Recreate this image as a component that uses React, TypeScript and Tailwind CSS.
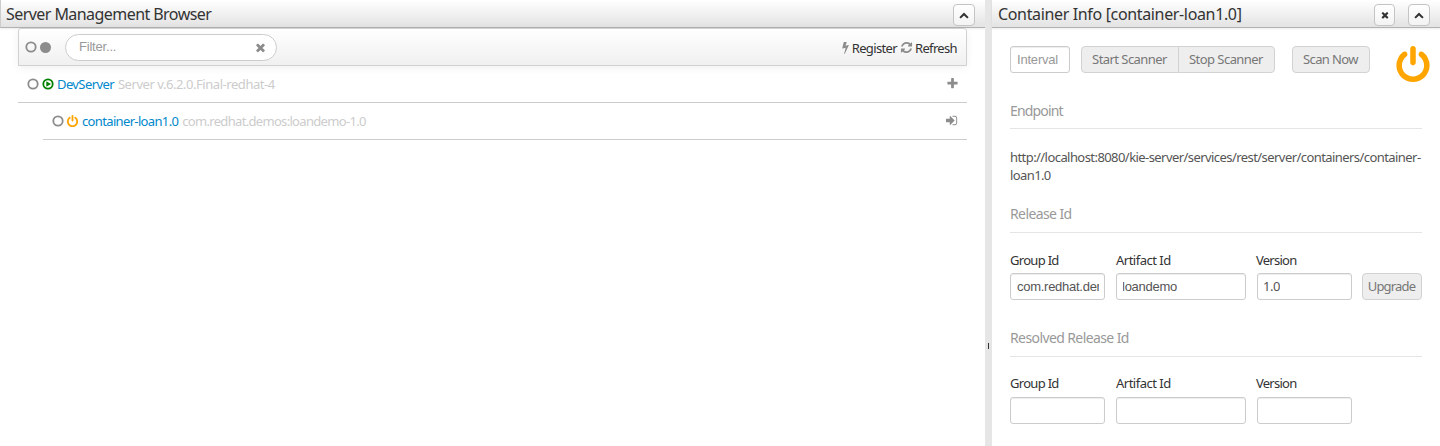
import React from "react";

const POWER =
  "M1664 896q0 156-61 298t-164 245-245 164-298 61-298-61-245-164-164-245-61-298q0-182 80.5-343t226.5-270q43-32 95.5-25t83.5 50q32 42 24.5 94.5t-49.5 84.5q-98 74-151.5 181t-53.5 228q0 104 40.5 198.5t109.5 163.5 163.5 109.5 198.5 40.5 198.5-40.5 163.5-109.5 109.5-163.5 40.5-198.5q0-121-53.5-228t-151.5-181q-42-32-49.5-84.5t24.5-94.5q31-43 84-50t95 25q146 109 226.5 270t80.5 343zm-640-768v640q0 52-38 90t-90 38-90-38-38-90v-640q0-52 38-90t90-38 90 38 38 90z";
const TIMES =
  "M1490 1322q0 40-28 68l-136 136q-28 28-68 28t-68-28l-294-294-294 294q-28 28-68 28t-68-28l-136-136q-28-28-28-68t28-68l294-294-294-294q-28-28-28-68t28-68l136-136q28-28 68-28t68 28l294 294 294-294q28-28 68-28t68 28l136 136q28 28 28 68t-28 68l-294 294 294 294q28 28 28 68z";
const PLUS =
  "M1600 736v192q0 40-28 68t-68 28h-416v416q0 40-28 68t-68 28h-192q-40 0-68-28t-28-68v-416h-416q-40 0-68-28t-28-68v-192q0-40 28-68t68-28h416v-416q0-40 28-68t68-28h192q40 0 68 28t28 68v416h416q40 0 68 28t28 68z";
const REFRESH =
  "M1639 1056q0 5-1 7-64 268-268 434.5t-478 166.5q-146 0-282.5-55t-243.5-157l-129 129q-19 19-45 19t-45-19-19-45v-448q0-26 19-45t45-19h448q26 0 45 19t19 45-19 45l-137 137q71 66 161 102t187 36q134 0 250-65t186-179q11-17 53-117 8-23 30-23h192q13 0 22.5 9.5t9.5 22.5zm25-800v448q0 26-19 45t-45 19h-448q-26 0-45-19t-19-45 19-45l138-138q-148-137-349-137-134 0-250 65t-186 179q-11 17-53 117-8 23-30 23h-199q-13 0-22.5-9.5t-9.5-22.5v-7q65-268 270-434.5t480-166.5q146 0 284 55.5t245 156.5l130-129q19-19 45-19t45 19 19 45z";
const BOLT =
  "M1333 566q18 20 7 44l-540 1157q-13 25-42 25-4 0-14-2-17-5-25.5-19t-4.5-30l197-808-406 101q-4 1-12 1-18 0-31-11-18-15-13-39l201-825q4-14 16-23t28-9h328q19 0 32 12.5t13 29.5q0 8-5 18l-171 463 396-98q8-2 12-2 19 0 34 15z";
const SIGN_IN =
  "M1184 896q0 26-19 45l-544 544q-19 19-45 19t-45-19-19-45v-288h-448q-26 0-45-19t-19-45v-384q0-26 19-45t45-19h448v-288q0-26 19-45t45-19 45 19l544 544q19 19 19 45zm352-352v704q0 119-84.5 203.5t-203.5 84.5h-320q-13 0-22.5-9.5t-9.5-22.5q0-4-1-20t-.5-26.5 3-23.5 10-19.5 20.5-6.5h320q66 0 113-47t47-113v-704q0-66-47-113t-113-47h-312l-11.5-1-11.5-3-8-5.5-7-9-2-13.5q0-4-1-20t-.5-26.5 3-23.5 10-19.5 20.5-6.5h320q119 0 203.5 84.5t84.5 203.5z";
const CHEVRON_UP =
  "M1683 1331l-166 165q-19 19-45 19t-45-19l-531-531-531 531q-19 19-45 19t-45-19l-166-165q-19-19-19-45.5t19-45.5l742-741q19-19 45-19t45 19l742 741q19 19 19 45.5t-19 45.5z";

function Icon({ d, className }: { d: string; className: string }) {
  return (
    <svg viewBox="0 0 1792 1792" fill="currentColor" className={`shrink-0 ${className}`}>
      <path d={d} />
    </svg>
  );
}

function Ring() {
  return (
    <svg viewBox="0 0 12 12" className="size-3 shrink-0 text-[#8c8c8c]">
      <circle cx="6" cy="6" r="4.7" fill="none" stroke="currentColor" strokeWidth="1.8" />
    </svg>
  );
}

function HeaderButton({ d, className, icon }: { d: string; className: string; icon: string }) {
  return (
    <button className={`flex h-[22px] items-center justify-center rounded border border-[#c4c4c4] bg-gradient-to-b from-white to-[#f3f3f3] text-[#333] ${className}`}>
      <Icon d={d} className={icon} />
    </button>
  );
}

function Header({ title, className, children }: { title: React.ReactNode; className: string; children: React.ReactNode }) {
  return (
    <header className={`flex h-7 items-start border-b border-[#b2b2b2] bg-gradient-to-b from-white to-[#e3e3e3] shadow-[0_1px_2px_rgba(0,0,0,0.08)] ${className}`}>
      <h1 className="grow whitespace-nowrap pt-[2px] text-base leading-6 text-[#333]">{title}</h1>
      {children}
    </header>
  );
}

function SectionTitle({ children, className }: { children: React.ReactNode; className: string }) {
  return <h2 className={`border-b border-[#e5e5e5] text-sm leading-[18px] text-[#999] ${className}`}>{children}</h2>;
}

const inputBox =
  "flex h-[27px] items-center overflow-hidden whitespace-nowrap rounded-[3px] border border-[#ccc] bg-white pl-[6px] pr-[5px] font-['Liberation_Sans',sans-serif] text-[13px] text-[#555] shadow-[inset_0_1px_1px_rgba(0,0,0,0.075)]";
const button =
  "flex h-[27px] items-center justify-center whitespace-nowrap border border-[#d2d2d2] bg-[#eee] text-[13px] text-[#777]";

function Field({ label, value, className }: { label: React.ReactNode; value: React.ReactNode; className: string }) {
  return (
    <div className={className}>
      <div className="h-[22px] text-[13px] leading-[18px] text-[#333]">{label}</div>
      <div className={inputBox}>
        <div className="overflow-hidden">{value}</div>
      </div>
    </div>
  );
}

export default function App() {
  return (
    <div className="flex h-[446px] w-[1440px] overflow-hidden bg-white font-['Noto_Sans',sans-serif] text-[13px] text-[#333]">
      <main className="w-[985px]">
        <Header className="border-l border-l-[#ccc] pl-[5px] pr-[10px]" title={<span className="tracking-[-0.56px]">Server Management Browser</span>}>
          <HeaderButton d={CHEVRON_UP} className="mt-1 w-[22px]" icon="size-[10px]" />
        </Header>
        <div className="ml-[18px] w-[949px]">
          <div className="flex h-[38px] items-center rounded-t-[3px] border border-[#d1d1d1] bg-gradient-to-b from-white to-[#f0f0f0] pl-[6px] pr-[9px] shadow-[0_2px_8px_rgba(0,0,0,0.06)]">
            <Ring />
            <span className="ml-[3px] mr-[14px] size-[11px] rounded-full bg-[#8c8c8c]" />
            <div className="flex h-[27px] w-[212px] items-center justify-between rounded-full border border-[#ccc] bg-white pl-[13px] pr-[9px] font-['Liberation_Sans',sans-serif] text-[13px] text-[#999]">
              <span className="tracking-[-0.2px]">Filter...</span>
              <Icon d={TIMES} className="size-[13px] text-[#8c8c8c]" />
            </div>
            <span className="grow" />
            <Icon d={BOLT} className="size-[13px] text-[#8c8c8c]" />
            <span className="mt-[3px] tracking-[-0.65px]">Register</span>
            <Icon d={REFRESH} className="ml-[3px] size-[13px] text-[#8c8c8c]" />
            <span className="ml-[2px] mt-[3px] tracking-[-0.65px]">Refresh</span>
          </div>
          <div className="flex h-[37px] items-center border-b border-[#ccc] px-[9px]">
            <Ring />
            <svg viewBox="0 0 12 12" className="ml-[3px] size-3 text-[#008000]">
              <circle cx="6" cy="6" r="4.7" fill="none" stroke="currentColor" strokeWidth="1.8" />
              <path d="M4.3 3.3L9 6L4.3 8.7z" fill="currentColor" />
            </svg>
            <span className="ml-[3px] mt-px tracking-[-0.6px] text-[#0088cc]">DevServer</span>
            <span className="ml-1 mt-px tracking-[-0.45px] text-[#ccc]">Server v.6.2.0.Final-redhat-4</span>
            <span className="grow" />
            <Icon d={PLUS} className="-mr-px mb-px size-[13px] text-[#8c8c8c]" />
          </div>
          <div className="ml-[25px] flex h-[37px] items-center border-b border-[#ccc] px-[9px]">
            <Ring />
            <Icon d={POWER} className="ml-[2px] size-[13px] text-[#ffa500]" />
            <span className="ml-[3px] mt-px tracking-[-0.65px] text-[#0088cc]">container-loan1.0</span>
            <span className="ml-[4px] mt-px tracking-[-0.68px] text-[#ccc]">com.redhat.demos:loandemo-1.0</span>
            <span className="grow" />
            <Icon d={SIGN_IN} className="-mr-px mb-px size-[13px] text-[#8c8c8c]" />
          </div>
        </div>
      </main>

      <div className="flex w-[7px] items-center bg-[#e6e6e6] pl-[3px] pt-[245px]">
        <span className="h-[6px] w-px bg-[#333]" />
      </div>

      <aside className="w-[448px]">
        <Header className="pl-[6px] pr-[10px]" title={<span className="tracking-[-0.35px]">Container Info [container-loan1.0]</span>}>
          <HeaderButton d={TIMES} className="mt-1 w-[21px]" icon="size-[10px]" />
          <HeaderButton d={CHEVRON_UP} className="ml-[13px] mt-1 w-[22px]" icon="size-[10px]" />
        </Header>
        <div className="pl-[18px]">
          <div className="flex h-[74px] items-start pt-[18px]">
            <div className={`w-[60px] ${inputBox}`}>
              <span className="tracking-[-0.2px] text-[#999]">Interval</span>
            </div>
            <div className={`ml-[11px] w-[98px] rounded-l ${button}`}>
              <span className="-ml-px tracking-[-0.55px]">Start Scanner</span>
            </div>
            <div className={`-ml-px w-[97px] rounded-r ${button}`}>
              <span className="-ml-px tracking-[-0.55px]">Stop Scanner</span>
            </div>
            <div className={`ml-[17px] w-[78px] rounded ${button}`}>
              <span className="-ml-px tracking-[-0.6px]">Scan Now</span>
            </div>
            <svg viewBox="128 0 1536 1664" fill="currentColor" className="ml-[26px] h-9 w-[34px] shrink-0 text-[#ffa500]">
              <path d={POWER} />
            </svg>
          </div>
          <div className="w-[412px]">
            <SectionTitle className="h-[27px]">
              <span className="tracking-[-0.85px]">Endpoint</span>
            </SectionTitle>
            <p className="mt-[19px] h-9 whitespace-nowrap leading-[18px] text-[#555]">
              <span className="tracking-[-0.565px]">http://localhost:8080/kie-server/services/rest/server/containers/container-</span>
              <br />
              <span className="tracking-[-0.6px]">loan1.0</span>
            </p>
            <SectionTitle className="mt-[21px] h-[28px]">
              <span className="tracking-[-0.6px]">Release Id</span>
            </SectionTitle>
            <div className="mt-[18px] flex items-end">
              <Field
                className="w-[95px]"
                label={<span className="tracking-[-0.7px]">Group Id</span>}
                value={<span className="tracking-[-0.27px]">com.redhat.demos</span>}
              />
              <Field
                className="ml-[11px] w-[130px]"
                label={<span className="tracking-[-0.5px]">Artifact Id</span>}
                value={<span className="-ml-px tracking-[-0.25px]">loandemo</span>}
              />
              <Field
                className="ml-[11px] w-[95px]"
                label={<span className="-ml-px tracking-[-0.75px]">Version</span>}
                value={<span className="-ml-px font-['Noto_Sans',sans-serif] tracking-[-0.4px]">1.0</span>}
              />
              <div className={`ml-[10px] w-[60px] rounded ${button}`}>
                <span className="-ml-px tracking-[-0.8px]">Upgrade</span>
              </div>
            </div>
            <SectionTitle className="mt-[29px] h-[28px]">
              <span className="tracking-[-0.6px]">Resolved Release Id</span>
            </SectionTitle>
            <div className="mt-[17px] flex items-end">
              <Field className="w-[95px] space-y-px" label={<span className="tracking-[-0.7px]">Group Id</span>} value="" />
              <Field className="ml-[11px] w-[130px] space-y-px" label={<span className="tracking-[-0.5px]">Artifact Id</span>} value="" />
              <Field className="ml-[11px] w-[95px] space-y-px" label={<span className="-ml-px tracking-[-0.75px]">Version</span>} value="" />
            </div>
          </div>
        </div>
      </aside>
    </div>
  );
}
